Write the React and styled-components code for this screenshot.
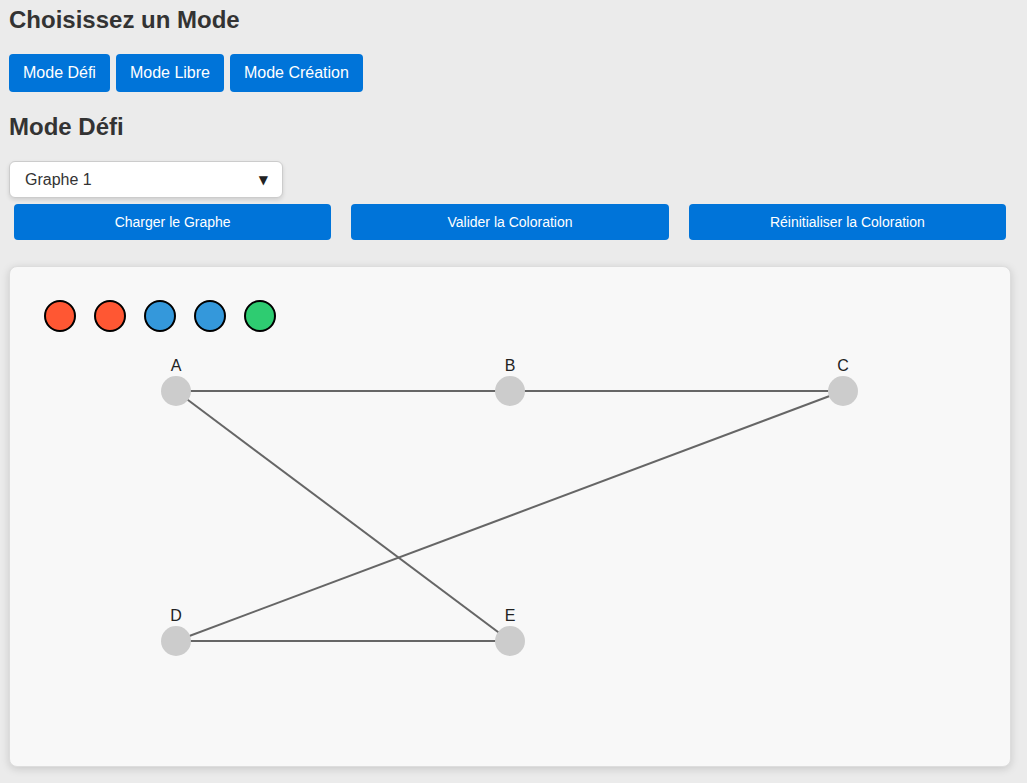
import React from "react";
import styled, { createGlobalStyle } from "styled-components";

const GlobalStyle = createGlobalStyle`
  html, body { margin: 0; padding: 0; }
  body {
    background: #ebebeb;
    font-family: "Liberation Sans", Arial, sans-serif;
    color: #333;
  }
`;

const Page = styled.div`
  padding: 6px 16px 16px 9px;
`;

const Title = styled.h2`
  margin: 0;
  font-size: 24px;
  line-height: 28px;
  font-weight: bold;
  color: #333;
`;

const ModeBar = styled.div`
  display: flex;
  gap: 6px;
  margin: 20px 0 21px;
`;

const ModeButton = styled.button`
  height: 38px;
  padding: 0 14px;
  border: none;
  border-radius: 4px;
  background: #0074d9;
  color: #fff;
  font-family: "Liberation Sans", Arial, sans-serif;
  font-size: 16px;
  cursor: pointer;
`;

const SelectWrap = styled.div`
  position: relative;
  width: 274px;
  margin-top: 20px;
`;

const Select = styled.select`
  appearance: none;
  width: 100%;
  height: 37px;
  padding: 0 15px;
  border: 1px solid #ccc;
  border-radius: 6px;
  background: #fff;
  box-shadow: 0 2px 4px rgba(0, 0, 0, 0.12);
  font-family: "Liberation Sans", Arial, sans-serif;
  font-size: 16px;
  color: #333;
  outline: none;
`;

const Arrow = styled.span`
  position: absolute;
  right: 15px;
  top: 50%;
  transform: translateY(-50%);
  font-family: "DejaVu Sans", sans-serif;
  font-size: 12px;
  line-height: 1;
  color: #222;
  pointer-events: none;
`;

const ActionBar = styled.div`
  display: flex;
  gap: 20px;
  margin: 6px 5px 26px 5px;
`;

const ActionButton = styled.button`
  flex: 1;
  height: 36px;
  border: none;
  border-radius: 4px;
  background: #0074d9;
  color: #fff;
  font-family: "Liberation Sans", Arial, sans-serif;
  font-size: 14px;
  cursor: pointer;
`;

const Card = styled.div`
  width: 1000px;
  border: 1px solid #ddd;
  border-radius: 8px;
  background: #f8f8f8;
  box-shadow: 0 2px 8px rgba(0, 0, 0, 0.15);
`;

const Palette = styled.div`
  display: flex;
  gap: 18px;
  padding: 33px 0 0 34px;
`;

const Swatch = styled.div`
  width: 28px;
  height: 28px;
  border-radius: 50%;
  border: 2px solid #000;
  background: ${(p) => p.$color};
`;

const GraphSvg = styled.svg`
  display: block;
  margin-top: 8px;
`;

const colors = ["#ff5733", "#ff5733", "#3498db", "#3498db", "#2ecc71"];

const nodes = {
  A: [166, 51],
  B: [500, 51],
  C: [833, 51],
  D: [166, 301],
  E: [500, 301],
};

const edges = [
  ["A", "B"],
  ["B", "C"],
  ["A", "E"],
  ["C", "D"],
  ["D", "E"],
];

export default function App() {
  return (
    <>
      <GlobalStyle />
      <Page>
        <Title>Choisissez un Mode</Title>
        <ModeBar>
          <ModeButton>Mode Défi</ModeButton>
          <ModeButton>Mode Libre</ModeButton>
          <ModeButton>Mode Création</ModeButton>
        </ModeBar>
        <Title>Mode Défi</Title>
        <SelectWrap>
          <Select defaultValue="1">
            <option value="1">Graphe 1</option>
            <option value="2">Graphe 2</option>
            <option value="3">Graphe 3</option>
          </Select>
          <Arrow>▼</Arrow>
        </SelectWrap>
        <ActionBar>
          <ActionButton>Charger le Graphe</ActionButton>
          <ActionButton>Valider la Coloration</ActionButton>
          <ActionButton>Réinitialiser la Coloration</ActionButton>
        </ActionBar>
        <Card>
          <Palette>
            {colors.map((c, i) => (
              <Swatch key={i} $color={c} />
            ))}
          </Palette>
          <GraphSvg width="1000" height="426" viewBox="0 0 1000 426">
            {edges.map(([a, b]) => (
              <line
                key={a + b}
                x1={nodes[a][0]}
                y1={nodes[a][1]}
                x2={nodes[b][0]}
                y2={nodes[b][1]}
                stroke="#666"
                strokeWidth="2"
              />
            ))}
            {Object.entries(nodes).map(([k, [x, y]]) => (
              <g key={k}>
                <circle cx={x} cy={y} r="15" fill="#ccc" />
                <text
                  x={x}
                  y={y - 20}
                  textAnchor="middle"
                  fontSize="16"
                  fontFamily="Liberation Sans, Arial, sans-serif"
                  fill="#222"
                >
                  {k}
                </text>
              </g>
            ))}
          </GraphSvg>
        </Card>
      </Page>
    </>
  );
}
